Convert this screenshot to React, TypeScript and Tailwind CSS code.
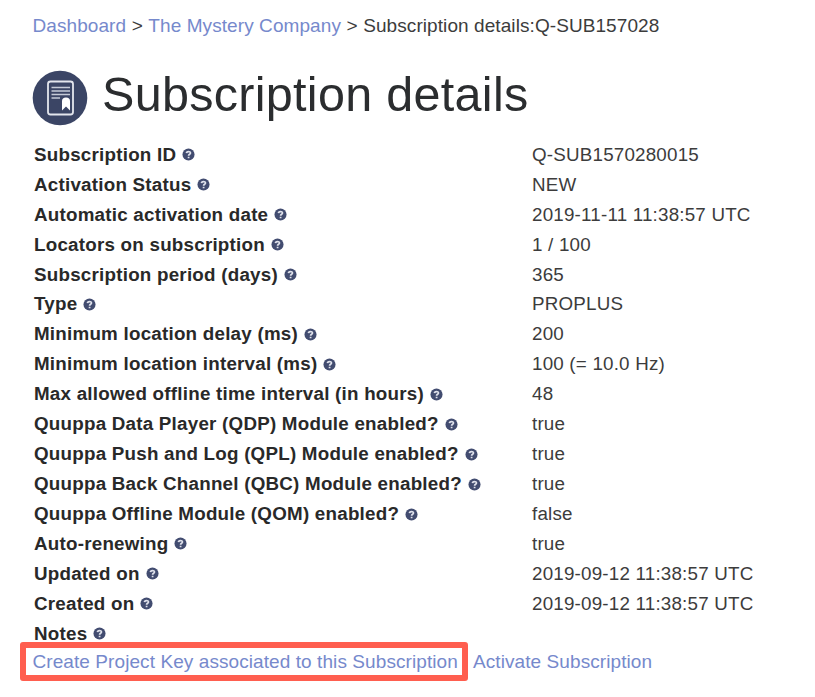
const rows: [string, string][] = [
  ["Subscription ID", "Q-SUB1570280015"],
  ["Activation Status", "NEW"],
  ["Automatic activation date", "2019-11-11 11:38:57 UTC"],
  ["Locators on subscription", "1 / 100"],
  ["Subscription period (days)", "365"],
  ["Type", "PROPLUS"],
  ["Minimum location delay (ms)", "200"],
  ["Minimum location interval (ms)", "100 (= 10.0 Hz)"],
  ["Max allowed offline time interval (in hours)", "48"],
  ["Quuppa Data Player (QDP) Module enabled?", "true"],
  ["Quuppa Push and Log (QPL) Module enabled?", "true"],
  ["Quuppa Back Channel (QBC) Module enabled?", "true"],
  ["Quuppa Offline Module (QOM) enabled?", "false"],
  ["Auto-renewing", "true"],
  ["Updated on", "2019-09-12 11:38:57 UTC"],
  ["Created on", "2019-09-12 11:38:57 UTC"],
  ["Notes", ""],
];

function Help() {
  return (
    <svg className="ml-[6px] size-[13px] shrink-0" viewBox="0 0 14 14">
      <circle cx="7" cy="7" r="6.5" fill="#424c70" />
      <path d="M4.8 5.5C4.9 3.3 9.1 3.2 9.1 5.4C9.1 6.9 7.1 6.7 7.1 8.4M7.1 9.4V11.1" fill="none" stroke="#dfe1eb" strokeWidth="1.9" />
    </svg>
  );
}

export default function App() {
  return (
    <main className="h-[697px] w-[815px] overflow-hidden bg-white pl-[32px] font-['Liberation_Sans',sans-serif] text-[19px] text-[#3c3c3c]">
      <nav className="flex h-[52px] items-center pl-[0.5px] whitespace-nowrap tracking-[0.08px]">
        <a className="text-[#7689cc]">Dashboard</a>
        <span className="mx-[5.5px]">&gt;</span>
        <a className="text-[#7689cc]">The Mystery Company</a>
        <span className="mr-[5.5px] ml-[5.5px]">&gt;</span>
        <span>Subscription details:Q-SUB157028</span>
      </nav>
      <header className="flex h-[88px] items-center gap-[14px]">
        <svg className="mt-[4px] size-[56px]" viewBox="0 0 56 56">
          <circle cx="28" cy="28" r="27.3" fill="#3b4565" />
          <rect x="16" y="11.5" width="25" height="33" rx="2.5" fill="none" stroke="#e4e6ed" strokeWidth="1.8" />
          <path d="M19.5 17.5H38M19.5 21H38M19.5 24.5H38M19.5 28H28" stroke="#c5cad7" strokeWidth="1.6" />
          <path d="M30 40.5V31Q30 27.5 34 27.5T38 31V40.5L34 36.5Z" fill="white" />
        </svg>
        <h1 className="-mt-[4px] text-[48.5px] tracking-[0.3px] whitespace-nowrap text-[#2b2d2f]">Subscription details</h1>
      </header>
      <dl className="pl-[2px]">
        {rows.map(([label, value]) => (
          <div key={label} className="flex h-[29.93px] items-center whitespace-nowrap">
            <dt className="flex w-[498px] items-center text-[18.8px] font-bold tracking-[0.23px] text-[#292929]">{label}<Help /></dt>
            <dd className="text-[18.8px] tracking-[0.2px]">{value}</dd>
          </div>
        ))}
      </dl>
      <footer className="-mt-[7px] -ml-[12px] flex items-center whitespace-nowrap tracking-[0.08px] text-[#7689cc]">
        <a className="flex h-[39px] w-[448px] items-center rounded-[3px] border-[6px] border-[#ff5e4f] pt-[2px] pl-[6.5px]">Create Project Key associated to this Subscription</a>
        <a className="ml-[5px] pt-[2px]">Activate Subscription</a>
      </footer>
    </main>
  );
}
